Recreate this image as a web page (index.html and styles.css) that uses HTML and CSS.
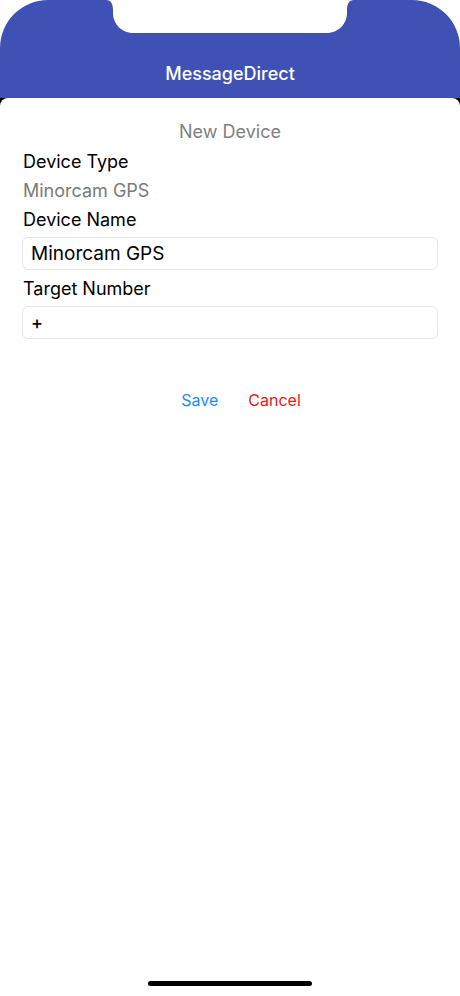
FILE: index.html
```html
<!DOCTYPE html>
<html lang="en">
<head>
<meta charset="utf-8">
<title>MessageDirect</title>
<link rel="stylesheet" href="styles.css">
</head>
<body>
<div class="screen">
  <header class="header">
    <svg class="notch" width="248" height="34" viewBox="0 0 248 34" aria-hidden="true">
      <path d="M0 0 H248 C243 0 241 4 241 10 V13 C241 24 232 33 221 33 H27 C16 33 7 24 7 13 V10 C7 4 5 0 0 0 Z" fill="#fff"/>
    </svg>
    <h1 class="title">MessageDirect</h1>
  </header>
  <main class="sheet">
    <div class="heading">New Device</div>
    <div class="label first">Device Type</div>
    <div class="value">Minorcam GPS</div>
    <div class="label">Device Name</div>
    <div class="field">Minorcam GPS</div>
    <div class="label">Target Number</div>
    <div class="field small">+</div>
    <div class="actions">
      <span class="btn save">Save</span>
      <span class="btn cancel">Cancel</span>
    </div>
    <div class="spacer"></div>
    <div class="home"></div>
  </main>
</div>
</body>
</html>
```
FILE: styles.css
```css
html, body {
  margin: 0;
  padding: 0;
  background: #fff;
}
body {
  font-family: Inter, "Noto Sans", sans-serif;
  width: 460px;
  height: 996px;
  overflow: hidden;
}
.screen {
  width: 460px;
  height: 996px;
  background: #000;
  display: flex;
  flex-direction: column;
  position: relative;
}
.screen::before {
  content: "";
  position: absolute;
  left: 0; right: 0; top: 0;
  height: 60px;
  background: #fff;
}
.header {
  position: relative;
  height: 98px;
  background: #3F51B5;
  border-radius: 48px 48px 0 0;
  display: flex;
  align-items: flex-end;
  justify-content: center;
  flex-shrink: 0;
}
.notch {
  position: absolute;
  top: 0;
  left: 106px;
  display: block;
}
.title {
  margin: 0 0 12px;
  color: #fff;
  font-size: 18px;
  font-weight: 500;
  line-height: 24px;
  letter-spacing: 0;
}
.sheet {
  flex: 1;
  background: #fff;
  border-radius: 8px 8px 0 0;
  display: flex;
  flex-direction: column;
  padding: 22px 22px 0 22px;
}
.heading {
  text-align: center;
  color: #808080;
  font-size: 18px;
  line-height: 24px;
}
.label, .value {
  font-size: 18px;
  line-height: 24px;
  color: #000;
  padding-left: 1px;
}
.value {
  color: #7a7a7a;
  margin-top: 5px;
}
.label { margin-top: 5px; }
.label.first { margin-top: 6px; }
.field {
  margin-top: 5px;
  height: 31px;
  border: 1px solid #e6e6e6;
  border-radius: 6px;
  padding: 0 8px;
  display: flex;
  align-items: center;
  font-size: 19px;
  color: #000;
  margin-bottom: 7px;
}
.field + .label { margin-top: 0; }
.field.small {
  margin-top: 5px;
  font-size: 18px;
  font-weight: 500;
}
.actions {
  margin-top: 42px;
  display: flex;
  justify-content: center;
  gap: 30px;
  font-size: 16px;
  line-height: 24px;
  padding-left: 22px;
}
.save { color: #1a8cf0; }
.cancel { color: #e6191e; }
.spacer { flex: 1; }
.home {
  align-self: center;
  width: 164px;
  height: 5px;
  border-radius: 3px;
  background: #000;
  margin: 0 0 10px;
}
```
